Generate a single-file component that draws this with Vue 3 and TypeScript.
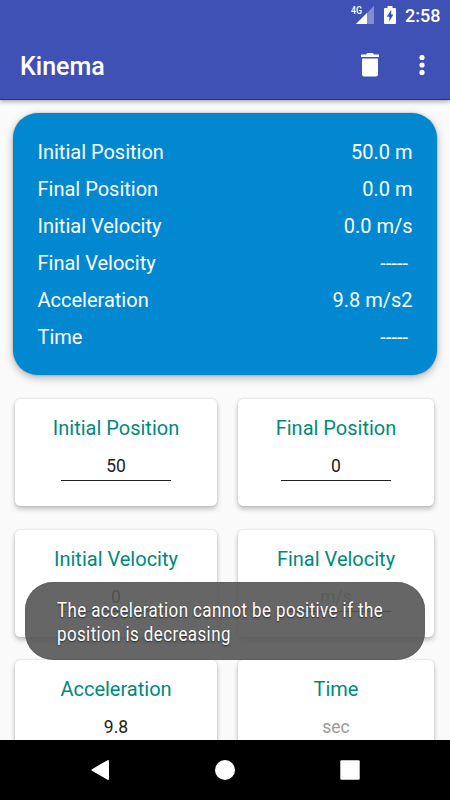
<script setup lang="ts">
interface SummaryRow {
  label: string
  value: string
  empty?: boolean
}

interface InputCard {
  label: string
  value: string
  hint?: boolean
}

const summary: SummaryRow[] = [
  { label: 'Initial Position', value: '50.0 m' },
  { label: 'Final Position', value: '0.0 m' },
  { label: 'Initial Velocity', value: '0.0 m/s' },
  { label: 'Final Velocity', value: '-----', empty: true },
  { label: 'Acceleration', value: '9.8 m/s2' },
  { label: 'Time', value: '-----', empty: true },
]

const cards: InputCard[] = [
  { label: 'Initial Position', value: '50' },
  { label: 'Final Position', value: '0' },
  { label: 'Initial Velocity', value: '0' },
  { label: 'Final Velocity', value: 'm/s', hint: true },
  { label: 'Acceleration', value: '9.8' },
  { label: 'Time', value: 'sec', hint: true },
]

const toastLines: string[] = [
  'The acceleration cannot be positive if the',
  'position is decreasing',
]
</script>

<template>
  <div class="screen">
    <header class="header">
      <div class="status">
        <svg class="signal" viewBox="0 0 24 22" width="24" height="22">
          <path d="M23 2V20H5Z" fill="#fff" fill-opacity=".35" />
          <path d="M16 9V20H5Z" fill="#fff" />
          <path d="M0 0H11.500V10H0Z" fill="#3f51b5" />
          <text x="0" y="9.6" class="net" textLength="11" lengthAdjust="spacingAndGlyphs">4G</text>
        </svg>
        <svg class="battery" viewBox="0 0 12 18" width="12" height="18">
          <path d="M3.5 0H8.500V2H11Q12 2 12 3V17Q12 18 11 18H1Q0 18 0 17V3Q0 2 1 2H3.500Z" fill="#fff" />
          <path d="M7.300 3.800 2.800 10.700H5.300V15.600L9.400 8.400H7.200Z" fill="#3f51b5" />
        </svg>
        <span class="clock">2:58</span>
      </div>
      <div class="toolbar">
        <h1 class="title">Kinema</h1>
        <svg class="trash" viewBox="0 0 18 24" width="18" height="24">
          <path d="M1 5.500H17V21.500Q17 23.500 15 23.500H3Q1 23.500 1 21.500ZM0 1.500H5L6.200 0H11.800L13 1.500H18V4H0Z" fill="#fff" />
        </svg>
        <svg class="more" viewBox="0 0 6 20" width="6" height="20">
          <circle cx="3" cy="2.500" r="2.600" fill="#fff" />
          <circle cx="3" cy="10" r="2.600" fill="#fff" />
          <circle cx="3" cy="17.400" r="2.600" fill="#fff" />
        </svg>
      </div>
    </header>

    <main class="content">
      <section class="summary">
        <div v-for="row in summary" :key="row.label" class="row">
          <span>{{ row.label }}</span>
          <span :class="{ dashes: row.empty }">{{ row.value }}</span>
        </div>
      </section>
      <section class="grid">
        <div v-for="card in cards" :key="card.label" class="card">
          <div class="label">{{ card.label }}</div>
          <div class="field" :class="{ hint: card.hint }">{{ card.value }}</div>
        </div>
      </section>
    </main>

    <nav class="nav">
      <svg viewBox="0 0 20 22" width="20" height="22">
        <path d="M18 2V20L2.500 11Z" fill="#fff" stroke="#fff" stroke-width="2" stroke-linejoin="round" />
      </svg>
      <svg viewBox="0 0 20 20" width="20" height="20"><circle cx="10" cy="10" r="10" fill="#fff" /></svg>
      <svg viewBox="0 0 20 20" width="20" height="20"><rect x=".3" y=".3" width="19.400" height="19.400" rx="1" fill="#fff" /></svg>
    </nav>

    <div class="toast">
      <div v-for="line in toastLines" :key="line" class="line">{{ line }}</div>
    </div>
  </div>
</template>

<style>
body {
  margin: 0;
  overflow: hidden;
}
</style>

<style scoped>
.screen {
  position: relative;
  display: flex;
  flex-direction: column;
  width: 450px;
  height: 800px;
  overflow: hidden;
  background: #fafafa;
  font-family: Roboto, sans-serif;
}
.header {
  position: relative;
  z-index: 1;
  box-sizing: border-box;
  height: 100px;
  flex: none;
  background: #3f51b5;
  border-bottom: 1px solid #1a31a4;
  box-shadow: 0 2px 4px rgba(0, 0, 0, 0.3);
  color: #fff;
}
.status {
  display: flex;
  height: 30px;
  justify-content: flex-end;
  align-items: flex-start;
  padding-right: 10px;
}
.signal {
  margin: 4px 9px 0 0;
}
.net {
  font: 500 10px Roboto, sans-serif;
  fill: #fff;
}
.battery {
  margin: 6px 9px 0 0;
}
.clock {
  font-size: 18px;
  font-weight: 500;
  line-height: 31px;
  width: 35px;
  white-space: nowrap;
}
.toolbar {
  display: flex;
  align-items: center;
  height: 70px;
  padding: 0 25px 0 20px;
}
.title {
  margin: 0 auto 0 0;
  padding-top: 2px;
  font-size: 25px;
  font-weight: 500;
}
.trash {
  margin-right: 40px;
}
.content {
  display: flex;
  flex-direction: column;
  flex: 1;
  min-height: 0;
  overflow: hidden;
}
.summary {
  flex: none;
  box-sizing: border-box;
  height: 262px;
  margin: 13px 13px 0;
  padding: 20.500px 24.500px 0;
  border-radius: 25px;
  background: #0288d1;
  box-shadow: 0 3px 8px rgba(0, 0, 0, 0.28), 0 0 2px rgba(0, 0, 0, 0.3);
  color: #fff;
}
.row {
  display: flex;
  justify-content: space-between;
  font-size: 20px;
  line-height: 37.100px;
}
.dashes {
  padding-right: 4.500px;
}
.grid {
  display: grid;
  grid-template-columns: 202px 196px;
  grid-auto-rows: 107px;
  gap: 23.500px 21px;
  padding: 24px 0 0 15px;
}
.card {
  display: flex;
  flex-direction: column;
  align-items: center;
  padding-top: 13px;
  box-sizing: border-box;
  border-radius: 5px;
  background: #fff;
  box-shadow: 0 3px 5px rgba(0, 0, 0, 0.24), 0 0 2px rgba(0, 0, 0, 0.16);
}
.label {
  font-size: 20px;
  line-height: 32px;
  color: #00897b;
}
.field {
  box-sizing: border-box;
  width: 110px;
  height: 37px;
  padding-top: 10px;
  border-bottom: 1px solid #212121;
  color: #212121;
  font-size: 17.500px;
  line-height: 25px;
  text-align: center;
}
.hint {
  color: #999;
}
.nav {
  display: flex;
  flex: none;
  justify-content: center;
  align-items: center;
  gap: 105px;
  height: 60px;
  background: #000;
}
.toast {
  position: absolute;
  left: 25px;
  top: 582px;
  box-sizing: border-box;
  width: 400px;
  height: 78px;
  padding: 15.500px 31px 0 32px;
  border-radius: 28px;
  background: rgba(85, 85, 85, 0.9);
  box-shadow: inset 0 0 1px rgba(0, 0, 0, 0.6);
  color: #fff;
}
.line {
  width: max-content;
  font-size: 20px;
  line-height: 24px;
  letter-spacing: 0.500px;
  white-space: nowrap;
  text-shadow: 0 1px 2px rgba(0, 0, 0, 0.6);
  transform: scaleX(0.845);
  transform-origin: left;
}
</style>
